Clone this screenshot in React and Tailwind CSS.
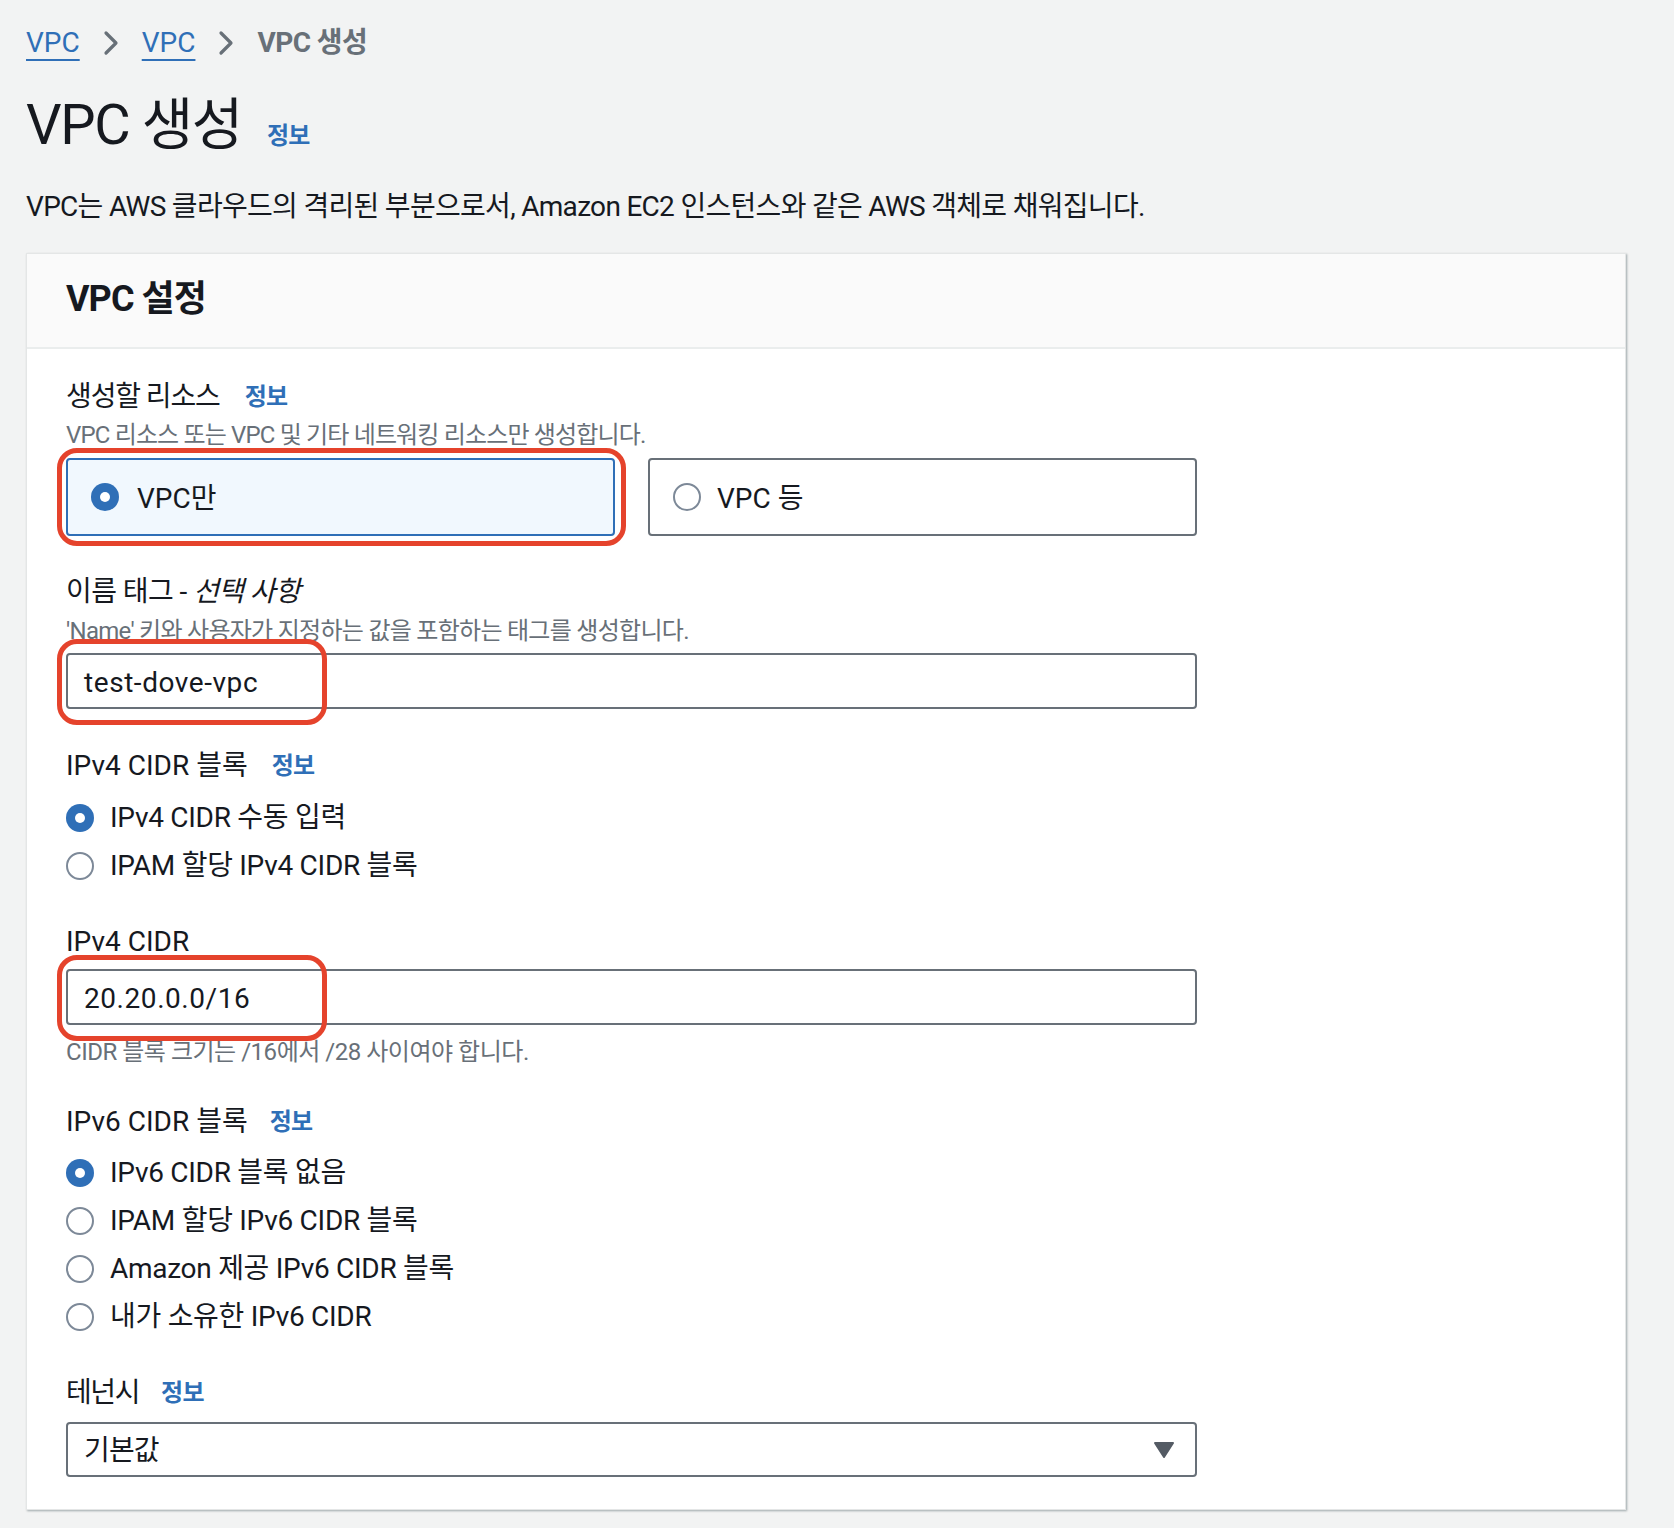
import React from "react";

const FONT = { fontFamily: 'Roboto, "Noto Sans CJK KR", sans-serif' };

function Chevron() {
  return (
    <svg width="16" height="28" viewBox="0 0 16 28" className="shrink-0">
      <path d="M3 4 L13 14 L3 24" fill="none" stroke="#687078" strokeWidth="3.2" strokeLinecap="round" strokeLinejoin="round" />
    </svg>
  );
}

function Radio({ checked }) {
  if (checked) {
    return (
      <span className="w-[28px] h-[28px] rounded-full bg-[#2f6fb7] flex items-center justify-center shrink-0">
        <span className="w-[10px] h-[10px] rounded-full bg-white" />
      </span>
    );
  }
  return <span className="w-[28px] h-[28px] rounded-full border-[2px] border-[#7d8998] bg-white shrink-0" />;
}

function Info({ className = "" }) {
  return <span className={"text-[24px] font-bold text-[#2f6fb7] tracking-[-0.03em] " + className}>정보</span>;
}

function RedBox({ className }) {
  return <div className={"absolute border-[5px] border-[#e5432c] rounded-[20px] pointer-events-none z-10 " + className} />;
}

function RadioRow({ checked, children }) {
  return (
    <div className="flex items-center gap-[16px] h-[40px]">
      <Radio checked={checked} />
      <span className="text-[28px] leading-[40px] text-[#16191f] tracking-[-0.01em]">{children}</span>
    </div>
  );
}

export default function App() {
  return (
    <div style={FONT} className="w-[1674px] h-[1528px] bg-[#f2f3f3] pl-[26px] overflow-hidden text-[#16191f]">
      {/* Breadcrumb */}
      <div className="pt-[23px] flex items-center h-[63px] gap-[23px] text-[28px] leading-[40px]">
        <span className="text-[#2f6fb7] underline decoration-[2px] underline-offset-[7px]">VPC</span>
        <Chevron />
        <span className="text-[#2f6fb7] underline decoration-[2px] underline-offset-[7px]">VPC</span>
        <Chevron />
        <span className="text-[#687078] font-bold tracking-[-0.02em]">VPC 생성</span>
      </div>

      {/* Title */}
      <div className="mt-[26px] flex items-baseline h-[72px]">
        <h1 className="text-[56px] leading-[72px] font-normal tracking-[-0.025em]">VPC 생성</h1>
        <Info className="ml-[25px]" />
      </div>

      <p className="mt-[26px] text-[28px] leading-[40px] tracking-[-0.025em]">
        VPC는 AWS 클라우드의 격리된 부분으로서, Amazon EC2 인스턴스와 같은 AWS 객체로 채워집니다.
      </p>

      {/* Panel */}
      <div className="mt-[26px] w-[1600px] bg-white border border-[#e4e6e6] shadow-[1px_1px_2px_rgba(0,28,36,0.35)]">
        <div className="bg-[#fafafa] pl-[39px] pt-[23px] pb-[26px] border-b-[2px] border-[#eaeded]">
          <h2 className="text-[36px] leading-[44px] font-bold tracking-[-0.025em]">VPC 설정</h2>
        </div>

        <div className="pl-[39px] pt-[28px] pb-[32px] w-[1170px]">
          {/* Resources */}
          <div className="flex items-center h-[40px] text-[28px] leading-[40px]">
            <span className="tracking-[-0.04em]">생성할 리소스</span>
            <Info className="ml-[25px]" />
          </div>
          <div className="mt-[2px] text-[24px] leading-[32px] text-[#687078] tracking-[-0.035em]">
            VPC 리소스 또는 VPC 및 기타 네트워킹 리소스만 생성합니다.
          </div>
          <div className="mt-[7px] grid grid-cols-2 gap-[33px] w-[1131px]">
            <div className="relative">
              <div className="h-[78px] border-[2px] border-[#2f6fb7] bg-[#f1f8fe] rounded-[4px] flex items-center pl-[23px] gap-[18px]">
                <Radio checked />
                <span className="text-[28px] leading-[40px] pt-[3px]">VPC만</span>
              </div>
              <RedBox className="-left-[9px] -top-[10px] -right-[11px] -bottom-[10px]" />
            </div>
            <div className="h-[78px] border-[2px] border-[#687078] bg-white rounded-[4px] flex items-center pl-[23px] gap-[16px]">
              <Radio />
              <span className="text-[28px] leading-[40px] pt-[3px]">VPC 등</span>
            </div>
          </div>

          {/* Name tag */}
          <div className="mt-[36px] text-[28px] leading-[40px] tracking-[-0.02em]">
            이름 태그 - <span className="italic">선택 사항</span>
          </div>
          <div className="mt-[3px] text-[24px] leading-[32px] text-[#687078] tracking-[-0.03em]">
            'Name' 키와 사용자가 지정하는 값을 포함하는 태그를 생성합니다.
          </div>
          <div className="relative mt-[6px] w-[1131px]">
            <div className="h-[56px] border-[2px] border-[#687078] rounded-[4px] bg-white flex items-center pl-[16px] pt-[4px] text-[28px] tracking-[0.02em]">
              test-dove-vpc
            </div>
            <RedBox className="-left-[9px] -top-[14px] w-[270px] h-[86px]" />
          </div>

          {/* IPv4 CIDR block */}
          <div className="mt-[37px] flex items-center h-[40px] text-[28px] leading-[40px]">
            <span>IPv4 CIDR 블록</span>
            <Info className="ml-[24px]" />
          </div>
          <div className="mt-[12px] flex flex-col gap-[8px]">
            <RadioRow checked>IPv4 CIDR 수동 입력</RadioRow>
            <RadioRow>IPAM 할당 IPv4 CIDR 블록</RadioRow>
          </div>

          {/* IPv4 CIDR */}
          <div className="mt-[36px] text-[28px] leading-[40px]">IPv4 CIDR</div>
          <div className="relative mt-[7px] w-[1131px]">
            <div className="h-[56px] border-[2px] border-[#687078] rounded-[4px] bg-white flex items-center pl-[16px] pt-[4px] text-[28px] tracking-[0.02em]">
              20.20.0.0/16
            </div>
            <RedBox className="-left-[9px] -top-[14px] w-[270px] h-[86px]" />
          </div>
          <div className="mt-[11px] text-[24px] leading-[32px] text-[#687078] tracking-[-0.02em]">
            CIDR 블록 크기는 /16에서 /28 사이여야 합니다.
          </div>

          {/* IPv6 */}
          <div className="mt-[34px] flex items-center h-[40px] text-[28px] leading-[40px]">
            <span>IPv6 CIDR 블록</span>
            <Info className="ml-[22px]" />
          </div>
          <div className="mt-[11px] flex flex-col gap-[8px]">
            <RadioRow checked>IPv6 CIDR 블록 없음</RadioRow>
            <RadioRow>IPAM 할당 IPv6 CIDR 블록</RadioRow>
            <RadioRow>Amazon 제공 IPv6 CIDR 블록</RadioRow>
            <RadioRow>내가 소유한 IPv6 CIDR</RadioRow>
          </div>

          {/* Tenancy */}
          <div className="mt-[36px] flex items-center h-[40px] text-[28px] leading-[40px]">
            <span className="tracking-[-0.05em]">테넌시</span>
            <Info className="ml-[22px]" />
          </div>
          <div className="mt-[9px] w-[1131px] h-[55px] border-[2px] border-[#687078] rounded-[4px] bg-white flex items-center justify-between pl-[16px] pr-[20px] text-[28px]">
            <span className="tracking-[-0.03em] pt-[2px]">기본값</span>
            <svg width="22" height="18" viewBox="0 0 22 18">
              <path d="M2 2 L20 2 L11 16 Z" fill="#545b64" stroke="#545b64" strokeWidth="2" strokeLinejoin="round" />
            </svg>
          </div>
        </div>
      </div>
    </div>
  );
}
